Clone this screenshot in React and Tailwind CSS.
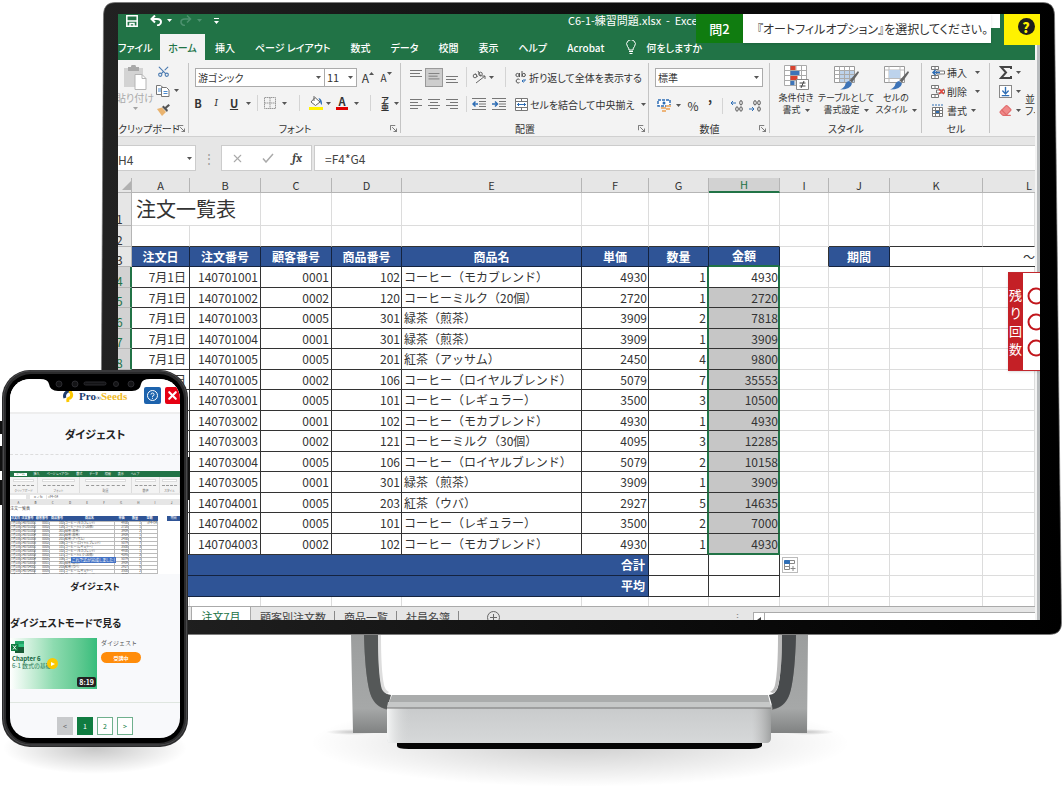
import { ArrowDownToLine, Eraser, Scissors, X } from 'lucide-react'
import clsx from 'clsx'

const tabs = ['挿入', 'ページ レイアウト', '数式', 'データ', '校閲', '表示', 'ヘルプ', 'Acrobat']

const orders = [
  ['140701001', '0001', '102', 'コーヒー（モカブレンド）', 4930, 1, 4930],
  ['140701002', '0002', '120', 'コーヒーミルク（20個）', 2720, 1, 2720],
  ['140701003', '0005', '301', '緑茶（煎茶）', 3909, 2, 7818],
  ['140701004', '0001', '301', '緑茶（煎茶）', 3909, 1, 3909],
  ['140701005', '0005', '201', '紅茶（アッサム）', 2450, 4, 9800],
  ['140701005', '0002', '106', 'コーヒー（ロイヤルブレンド）', 5079, 7, 35553],
  ['140703001', '0005', '101', 'コーヒー（レギュラー）', 3500, 3, 10500],
  ['140703002', '0001', '102', 'コーヒー（モカブレンド）', 4930, 1, 4930],
  ['140703003', '0002', '121', 'コーヒーミルク（30個）', 4095, 3, 12285],
  ['140703004', '0005', '106', 'コーヒー（ロイヤルブレンド）', 5079, 2, 10158],
  ['140703005', '0001', '301', '緑茶（煎茶）', 3909, 1, 3909],
  ['140704001', '0005', '203', '紅茶（ウバ）', 2927, 5, 14635],
  ['140704002', '0005', '101', 'コーヒー（レギュラー）', 3500, 2, 7000],
  ['140704003', '0002', '102', 'コーヒー（モカブレンド）', 4930, 1, 4930],
]

const headings = ['注文日', '注文番号', '顧客番号', '商品番号', '商品名', '単価', '数量', '金額']
const letters = ['A', 'B', 'C', 'D', 'E', 'F', 'G', 'H', 'I', 'J', 'K', 'L']

function Caret({ className }) {
  return (
    <svg viewBox="0 0 5 3" className={clsx('h-[3px] w-[5px] shrink-0', className)} fill="#555">
      <path d="M0 0h5L2.500 3z" />
    </svg>
  )
}

function Divider({ className }) {
  return <span className={clsx('w-px justify-self-center bg-[#d4d4d4]', className)} />
}

function IconButton({ label, className, children }) {
  return (
    <button type="button" aria-label={label} className={clsx('flex shrink-0 items-center justify-center', className)}>
      {children}
    </button>
  )
}

function Group({ label, launcher = true, start, className, children }) {
  return (
    <section className={clsx('relative flex shrink-0 flex-col', className)}>
      <div className="h-[62px]">{children}</div>
      <div className={clsx('flex h-[14px] items-center leading-none', start ? 'justify-start' : 'justify-center')}>{label}</div>
      {launcher && (
        <svg viewBox="0 0 8 8" className="absolute right-1 bottom-1 size-[7px]" fill="none" stroke="#666">
          <path d="M.5 6V.5H6M2.500 2.500l5 5M7.500 4v3.500H4" />
        </svg>
      )}
      <span className="absolute top-[3px] right-0 bottom-[3px] w-px bg-[#c4c4c4]" />
    </section>
  )
}

/* ---- ribbon icons ---- */

function Lines({ widths, align = 'start', className }) {
  return (
    <svg viewBox="0 0 12 11" className={clsx('h-[11px] w-[12px]', className)} stroke="#777">
      {widths.map((w, i) => {
        const x = align === 'start' ? 0 : align === 'end' ? 12 - w : (12 - w) / 2
        return <path key={i} d={`M${x} ${i * 3 + 0.5}h${w}`} />
      })}
    </svg>
  )
}

function IndentIcon({ flip }) {
  return (
    <svg viewBox="0 0 14 12" className="h-[12px] w-[14px]" fill="none">
      <path d="M0 .5h14M7 3.500h7M7 6h7M7 8.500h7M0 11.500h14" stroke="#777" />
      <path d={flip ? 'M0 6h5M3 3.500L5.500 6 3 8.500' : 'M6 6H1M3.500 3.500L1 6l2.500 2.500'} stroke="#2f6eb5" strokeWidth="1.500" />
    </svg>
  )
}

function PasteIcon() {
  return (
    <svg viewBox="0 0 24 25" className="h-[25px] w-[24px]">
      <path d="M1 3h19v19H1z" fill="#d3d3d3" />
      <path d="M5 2h3a2.500 2.500 0 0 1 5 0h3v4H5z" fill="#a9a9a9" />
      <path d="M12 9.500h7l4 4v11H12z" fill="#fff" stroke="#b5b5b5" />
      <path d="M19 9.500v4h4" fill="none" stroke="#b5b5b5" />
    </svg>
  )
}

function CopyIcon() {
  return (
    <svg viewBox="0 0 14 12" className="h-[12px] w-[14px]" fill="#fff" stroke="#777">
      <path d="M.5.5h4l2.500 2v7H.5z" />
      <path d="M2 4h3M2 6h3" stroke="#4b8bd0" />
      <path d="M5.500 2.500h5l2.500 2.500v6.500H5.500z" />
      <path d="M7.500 6.500h4M7.500 8.500h4" stroke="#4b8bd0" />
    </svg>
  )
}

function BrushIcon() {
  return (
    <svg viewBox="0 0 14 12" className="h-[12px] w-[14px]">
      <path d="M1 5l5-1.500 4 4.500-4 4z" fill="#e9b36f" />
      <path d="M6 3l5 5 1-2-1.500-1.500L14 1.500 12.500 0 9 3 7.500 1.500z" fill="#555" />
    </svg>
  )
}

function BordersIcon() {
  return (
    <svg viewBox="0 0 12 12" className="size-[12px]" fill="none" stroke="#999">
      <path d="M.5.5h11v11H.5zM6 .5v11M.5 6h11" strokeDasharray="1.500 .5" />
    </svg>
  )
}

function BucketIcon() {
  return (
    <svg viewBox="0 0 14 14" className="size-[14px]">
      <path d="M6 1.500L11 6 6.500 9.500 2 6z" fill="#fff" stroke="#666" />
      <path d="M5 0v5" stroke="#666" />
      <path d="M9.500 2q4 1 3.500 7-1.500-1-2-3.500z" fill="#2f6eb5" />
      <path d="M0 11h14v3H0z" fill="#fff200" />
    </svg>
  )
}

function OrientationIcon() {
  return (
    <svg viewBox="0 0 14 14" className="size-[14px]" fill="none" stroke="#666">
      <circle cx="3" cy="6" r="1.800" />
      <path d="M3.500 3.500l2 3.500M6 1l3 5.500" />
      <circle cx="8.500" cy="4" r="1.800" />
      <path d="M4 13l9-7M13 9V6h-3" />
    </svg>
  )
}

function WrapIcon() {
  return (
    <svg viewBox="0 0 12 13" className="h-[13px] w-[12px] shrink-0" fill="none" stroke="#555">
      <circle cx="2.500" cy="4" r="1.600" />
      <path d="M4.500 2v4M7 0v6" />
      <circle cx="8.800" cy="4" r="1.600" />
      <path d="M4.500 8.500a2 2 0 1 0 0 3" />
      <path d="M10 8v2H7M8.500 8.500L7 10l1.500 1.500" stroke="#2f6eb5" />
    </svg>
  )
}

function MergeIcon() {
  return (
    <svg viewBox="0 0 13 13" className="size-[13px] shrink-0" fill="#fff" stroke="#777">
      <path d="M.5.5h12v12H.5zM.5 3.500h12M.5 9.500h12M6.500.5v3M6.500 9.500v3" />
      <path d="M2 6.500h9M4 5L2.500 6.500 4 8M9 5l1.500 1.500L9 8" fill="none" stroke="#2f6eb5" />
    </svg>
  )
}

function CurrencyIcon() {
  return (
    <svg viewBox="0 0 14 13" className="h-[13px] w-[14px]">
      <path d="M1 1h12v6H1z" fill="#fff" stroke="#2f6eb5" strokeWidth="1.500" strokeDasharray="3 1" />
      <circle cx="7" cy="4" r="1.500" fill="#2f6eb5" />
      <path d="M4 8h5v2H4zM5 11h4v2H5zM9 6h5v2H9zM9 9h4v2H9z" fill="#edb479" />
    </svg>
  )
}

function DecimalIcon({ grow }) {
  return (
    <svg viewBox="0 0 13 12" className="h-[12px] w-[13px]" fill="none" stroke="#555">
      <ellipse cx="11" cy="2.800" rx="1.300" ry="2.200" />
      {grow ? (
        <path d="M6 3H1M3 1L1 3l2 2" stroke="#2f6eb5" />
      ) : (
        <ellipse cx="7" cy="2.800" rx="1.300" ry="2.200" />
      )}
      <ellipse cx="11" cy="9" rx="1.300" ry="2.200" />
      {grow ? (
        <ellipse cx="7" cy="9" rx="1.300" ry="2.200" />
      ) : (
        <path d="M1 9h5M4 7l2 2-2 2" stroke="#2f6eb5" />
      )}
    </svg>
  )
}

function CondIcon() {
  return (
    <svg viewBox="0 0 25 25" className="size-[25px]">
      <path d="M.5.5h22v20H.5zM.5 5.500h22M.5 10.500h22M.5 15.500h22M6.500.5v20M12 .5v20M17.500.5v20" fill="#fff" stroke="#aaa" />
      <path d="M6.500 1h5v4h-5zM6.500 11h7v4h-7z" fill="#d8432f" />
      <path d="M6.500 6h9v4h-9zM6.500 16h4v4h-4z" fill="#3d74b8" />
      <path d="M12.500 14.500h12v10h-12z" fill="#fff" stroke="#888" />
      <path d="M15.500 18h6M15.500 21h6M20 16l-3 7" stroke="#444" />
    </svg>
  )
}

function TableStyleIcon({ single }) {
  return (
    <svg viewBox="0 0 25 25" className="size-[25px]">
      <path d="M.5 1.500h20v16H.5z" fill="#fff" stroke="#999" />
      {single ? (
        <>
          <path d="M.5 5h20M.5 13.500h20M5 1.500v16M16 1.500v16" stroke="#bbb" />
          <path d="M5 5h11v8H5z" fill="#bdd3ec" />
        </>
      ) : (
        <>
          <path d="M6 6h14v11H6z" fill="#bdd3ec" />
          <path d="M.5 5.500h20M.5 9.500h20M.5 13.500h20M5.500 1.500v16M10.500 1.500v16M15.500 1.500v16" stroke="#aaa" />
        </>
      )}
      <path d="M24 6l1 1.500-7 10-2.500-2z" fill="#666" />
      <path d="M15 16l3 2.500q-1 6-12 6 5-2 5.500-6 1.500-2.500 3.500-2.500z" fill="#3d74b8" />
    </svg>
  )
}

function CellsIcon({ kind }) {
  return (
    <svg viewBox="0 0 14 13" className="h-[13px] w-[14px]" fill="#fff" stroke="#777">
      {kind === 'format' ? (
        <>
          <path d="M1.500 3.500h10v9h-10zM4.500 3.500v9M8.500 3.500v9M1.500 6.500h10M1.500 9.500h10" />
          <path d="M4.500 6.500h4v3h-4z" fill="#2f6eb5" />
          <path d="M1 1h11" stroke="#2f6eb5" strokeDasharray="2 1" />
        </>
      ) : (
        <>
          <path d="M.5.5h7v3h-7zM4 .5v3M.5 9.500h7v3h-7zM4 9.500v3M5.500 5h8v3h-8z" />
          {kind === 'insert' ? (
            <path d="M9 6.500H2M4.500 4L2 6.500 4.500 9" fill="none" stroke="#2f6eb5" strokeWidth="1.500" />
          ) : (
            <path d="M8 4l5 5M13 4L8 9" stroke="#e0433a" strokeWidth="1.500" />
          )}
        </>
      )}
    </svg>
  )
}

/* ---- excel window ---- */

function TitleBar() {
  return (
    <header className="flex h-5 items-start bg-[#217346] text-white">
      <div className="flex h-[13px] items-center pl-2">
        <IconButton label="上書き保存" className="w-3">
          <svg viewBox="0 0 12 12" className="size-3" fill="none" stroke="#fff" strokeWidth="1.500">
            <path d="M.8.8h10.400v10.400H.8zM1 6h10M4 11V8.500h4V11" />
          </svg>
        </IconButton>
        <IconButton label="元に戻す" className="ml-3 w-3">
          <svg viewBox="0 0 12 11" className="h-[11px] w-3" fill="none" stroke="#fff" strokeWidth="2">
            <path d="M1 4h6q4 0 4 3t-4 3.500M5 .5L1.500 4 5 7.500" />
          </svg>
        </IconButton>
        <svg viewBox="0 0 5 3" className="ml-[5px] h-[3px] w-[5px]" fill="#fff"><path d="M0 0h5L2.500 3z" /></svg>
        <IconButton label="やり直し" className="ml-2 w-3">
          <svg viewBox="0 0 12 11" className="h-[11px] w-3" fill="none" stroke="#4e9270" strokeWidth="1.500">
            <path d="M11 4H5Q1 4 1 7t4 3.500M7 .5L10.500 4 7 7.500" />
          </svg>
        </IconButton>
        <svg viewBox="0 0 5 3" className="ml-[5px] h-[3px] w-[5px]" fill="#4e9270"><path d="M0 0h5L2.500 3z" /></svg>
        <svg viewBox="0 0 5 6" className="ml-3 h-[6px] w-[5px]" fill="#fff"><path d="M0 0h5v1H0zM0 3h5L2.500 6z" /></svg>
      </div>
      <h1 className="ml-auto w-[467px] text-[11px] leading-[13px] whitespace-pre">C6-1-練習問題.xlsx  -  Excel</h1>
    </header>
  )
}

function TabBar() {
  return (
    <nav className="flex h-[26px] items-stretch bg-[#217346] text-[10px] font-medium whitespace-nowrap text-white">
      <button type="button" className="w-[42px] shrink-0 text-left">ファイル</button>
      <button type="button" className="w-[45px] shrink-0 bg-[#f3f3f3] text-[#217346]">ホーム</button>
      {tabs.map((tab) => (
        <button key={tab} type="button" className="shrink-0 px-[10px]">{tab}</button>
      ))}
      <button type="button" className="flex shrink-0 items-center gap-[10px] pl-3">
        <svg viewBox="0 0 10 14" className="h-[14px] w-[10px]" fill="none" stroke="#fff">
          <path d="M3 10Q3 8 1.500 6.500a4.300 4.300 0 1 1 7 0Q7 8 7 10zM3 11.500h4M3.500 13.500h3" />
        </svg>
        何をしますか
      </button>
    </nav>
  )
}

function Ribbon() {
  return (
    <div className="flex bg-[#f3f3f3] text-[10px] whitespace-nowrap text-[#333]">
      <Group label="クリップボード" start className="w-[71px]">
        <div className="flex h-full pt-[5px]">
          <button type="button" className="flex w-[34px] flex-col items-center text-[#aaa]">
            <PasteIcon />
            <span className="leading-[16px]">貼り付け</span>
            <Caret className="mt-px opacity-50" />
          </button>
          <div className="flex flex-col gap-[6px] pl-1">
            <IconButton label="切り取り" className="h-[13px] w-[14px]">
              <Scissors size={13} className="-rotate-90 text-[#4a7ab0]" />
            </IconButton>
            <div className="flex items-center gap-1">
              <IconButton label="コピー" className="h-[13px] w-[14px]"><CopyIcon /></IconButton>
              <Caret />
            </div>
            <IconButton label="書式のコピー" className="h-[13px] w-[14px]"><BrushIcon /></IconButton>
          </div>
        </div>
      </Group>

      <Group label="フォント" className="w-[212px]">
        <div className="flex pt-[8px] pl-[6px]">
          <label className="relative flex items-center">
            <select aria-label="フォント名" className="h-[19px] w-[130px] appearance-none border border-[#ababab] bg-white pl-[2px] text-[10px] leading-none">
              <option>游ゴシック</option>
            </select>
            <Caret className="absolute right-1" />
          </label>
          <label className="relative -ml-px flex items-center">
            <select aria-label="フォント サイズ" className="h-[19px] w-[33px] appearance-none border border-[#ababab] bg-white pl-[2px] text-[11px] leading-none">
              <option>11</option>
            </select>
            <Caret className="absolute right-1" />
          </label>
          <IconButton label="拡大" className="ml-1 w-[14px] text-[12px]">A<Caret className="mb-2 rotate-180" /></IconButton>
          <IconButton label="縮小" className="ml-1 w-[14px] text-[10px]">A<Caret className="mb-2" /></IconButton>
        </div>
        <div className="mt-2 grid h-4 grid-cols-[18px_18px_18px_10px_8px_18px_10px_20px_14px_10px_18px_10px_18px_12px_10px] items-center justify-items-center text-[11px]">
          <button type="button" className="font-bold">B</button>
          <button type="button" className="font-serif italic">I</button>
          <button type="button" className="font-bold underline">U</button>
          <Caret />
          <Divider className="h-4" />
          <IconButton label="罫線"><BordersIcon /></IconButton>
          <Caret />
          <Divider className="h-4" />
          <IconButton label="塗りつぶしの色"><BucketIcon /></IconButton>
          <Caret />
          <button type="button" className="h-[14px] w-3 border-b-3 border-[#e00000] leading-[11px] font-bold">A</button>
          <Caret />
          <Divider className="h-4" />
          <button type="button" className="text-[8px] leading-[7px] font-bold">ア<br />亜</button>
          <Caret />
        </div>
      </Group>

      <Group label="配置" className="w-[248px]">
        <div className="grid grid-cols-[18px_18px_18px_10px_16px_8px_20px_130px] items-center justify-items-center gap-y-[9px] pt-[7px] pl-[6px]">
          <IconButton label="上揃え" className="h-[19px] w-[18px] pb-1"><Lines widths={[12, 10, 12]} /></IconButton>
          <IconButton label="上下中央揃え" className="h-[19px] w-[18px] border border-[#999] bg-[#cdcdcd]"><Lines widths={[12, 10, 12]} className="pt-px" /></IconButton>
          <IconButton label="下揃え" className="h-[19px] w-[18px] pt-2"><Lines widths={[12, 10, 12]} /></IconButton>
          <Divider className="h-5" />
          <IconButton label="方向"><OrientationIcon /></IconButton>
          <Caret />
          <Divider className="h-5" />
          <button type="button" className="flex items-center gap-[2px] justify-self-start"><WrapIcon />折り返して全体を表示する</button>
          <IconButton label="左揃え"><Lines widths={[12, 8, 12, 8]} /></IconButton>
          <IconButton label="中央揃え"><Lines widths={[12, 8, 12, 8]} align="center" /></IconButton>
          <IconButton label="右揃え"><Lines widths={[12, 8, 12, 8]} align="end" /></IconButton>
          <Divider className="h-4" />
          <IconButton label="インデントを減らす"><IndentIcon /></IconButton>
          <IconButton label="インデントを増やす" className="col-span-2 pr-1"><IndentIcon flip /></IconButton>
          <button type="button" className="flex items-center gap-[2px] justify-self-start"><MergeIcon />セルを結合して中央揃え<Caret className="ml-1" /></button>
        </div>
      </Group>

      <Group label="数値" className="w-[121px]">
        <div className="pt-[8px] pl-[6px]">
          <label className="relative flex w-[108px] items-center">
            <select aria-label="表示形式" className="h-[19px] w-full appearance-none border border-[#ababab] bg-white pl-[2px] text-[10px] leading-none">
              <option>標準</option>
            </select>
            <Caret className="absolute right-1" />
          </label>
          <div className="mt-2 grid h-4 grid-cols-[18px_10px_20px_14px_10px_18px_18px] items-center justify-items-center">
            <IconButton label="通貨"><CurrencyIcon /></IconButton>
            <Caret />
            <button type="button" className="text-[12px]">%</button>
            <button type="button" className="text-[14px] font-bold">’</button>
            <Divider className="h-4" />
            <IconButton label="小数点以下の表示桁数を増やす"><DecimalIcon grow /></IconButton>
            <IconButton label="小数点以下の表示桁数を減らす"><DecimalIcon /></IconButton>
          </div>
        </div>
      </Group>

      <Group label="スタイル" launcher={false} className="w-[152px]">
        <div className="grid grid-cols-[42px_58px_42px] justify-center pt-[5px] text-[9px] leading-[12px]">
          <button type="button" className="flex flex-col items-center gap-[2px]">
            <CondIcon />
            <span>条件付き<br />書式<Caret className="ml-1 inline-block" /></span>
          </button>
          <button type="button" className="flex flex-col items-center gap-[2px]">
            <TableStyleIcon />
            <span>テーブルとして<br />書式設定<Caret className="ml-1 inline-block" /></span>
          </button>
          <button type="button" className="flex flex-col items-center gap-[2px]">
            <TableStyleIcon single />
            <span>セルの<br />スタイル<Caret className="ml-1 inline-block" /></span>
          </button>
        </div>
      </Group>

      <Group label="セル" launcher={false} className="w-[68px]">
        <div className="flex flex-col gap-[5px] pt-[5px] pl-[9px]">
          <button type="button" className="flex h-[14px] items-center"><CellsIcon kind="insert" /><span className="ml-[2px]">挿入</span><Caret className="ml-2" /></button>
          <button type="button" className="flex h-[14px] items-center"><CellsIcon kind="delete" /><span className="ml-[2px]">削除</span><Caret className="ml-2" /></button>
          <button type="button" className="flex h-[14px] items-center"><CellsIcon kind="format" /><span className="ml-[2px]">書式</span><Caret className="ml-1" /></button>
        </div>
      </Group>

      <div className="flex min-w-0 flex-1 overflow-hidden pt-[5px] pl-[9px]">
        <div className="flex shrink-0 flex-col gap-[5px]">
          <button type="button" aria-label="合計" className="flex h-[14px] items-center gap-1">
            <svg viewBox="0 0 13 13" className="size-[13px]" fill="none" stroke="#444" strokeWidth="2"><path d="M12 3V1H2l5 5.500L2 12h10v-2" /></svg>
            <Caret />
          </button>
          <button type="button" aria-label="フィル" className="flex h-[14px] items-center gap-1">
            <span className="border border-[#888] bg-white"><ArrowDownToLine size={11} strokeWidth={3} className="text-[#2f6eb5]" /></span>
            <Caret />
          </button>
          <button type="button" aria-label="クリア" className="flex h-[14px] items-center gap-1">
            <Eraser size={13} className="fill-[#f08a8a] text-[#e06a6a]" />
            <Caret />
          </button>
        </div>
        <div className="pt-7 pl-1 leading-[12px]">並べ替えと<br />フィルター</div>
      </div>
    </div>
  )
}

function FormulaBar() {
  return (
    <div className="flex items-center border-t border-[#d0d0d0] bg-[#e6e6e6] pt-2 pb-[7px] text-[12px] text-[#444]">
      <label className="relative flex items-center">
        <input aria-label="名前ボックス" defaultValue="H4" className="h-[26px] w-[78px] border border-l-0 border-[#ccc] bg-white pt-[2px]" />
        <Caret className="absolute right-1" />
      </label>
      <span className="w-[25px] text-center text-[#999]">⋮</span>
      <div className="flex h-[26px] w-[91px] shrink-0 items-center justify-around border border-[#ccc] bg-white">
        <IconButton label="キャンセル"><X size={13} className="text-[#aaa]" /></IconButton>
        <IconButton label="入力">
          <svg viewBox="0 0 12 10" className="h-[10px] w-3" fill="none" stroke="#aaa" strokeWidth="1.500"><path d="M1 5.500L4 9l7-8" /></svg>
        </IconButton>
        <button type="button" aria-label="関数の挿入" className="font-serif font-bold italic">fx</button>
      </div>
      <input aria-label="数式バー" defaultValue="=F4*G4" className="ml-[2px] h-[26px] min-w-0 flex-1 border border-r-0 border-[#ccc] bg-white pl-[10px]" />
    </div>
  )
}

const grid = 'border-r border-b border-[#dcdcdc]'
const cell = 'border-r border-b border-[#333]'
const head = 'border-r border-b border-[#14233f] bg-[#2f5496] font-bold text-white'

function RowHead({ n, selected }) {
  return (
    <th
      scope="row"
      className={clsx(
        'overflow-hidden border-b text-left align-bottom font-normal',
        selected
          ? 'border-r-2 border-b-[#b5b5b5] border-r-[#217346] bg-[#d2d2d2] text-[#217346]'
          : 'border-r border-[#b5b5b5] bg-[#e6e6e6]',
      )}
    >
      <span className="block -indent-[2px] leading-[13px]">{n}</span>
    </th>
  )
}

function Sheet() {
  return (
    <table className="w-full table-fixed border-separate border-spacing-0 bg-white text-[12px] leading-none whitespace-nowrap text-[#333] [font-feature-settings:normal] [&_td]:p-0 [&_th]:p-0">
      <colgroup>
        <col className="w-[14px]" />
        <col className="w-[58px]" />
        <col className="w-[71px]" />
        <col className="w-[71px]" />
        <col className="w-[70px]" />
        <col className="w-[180px]" />
        <col className="w-[67px]" />
        <col className="w-[60px]" />
        <col className="w-[71px]" />
        <col className="w-[49px]" />
        <col className="w-[61px]" />
        <col className="w-[93px]" />
        <col />
      </colgroup>
      <thead>
        <tr className="h-[15px] bg-[#e6e6e6] text-[11px]">
          <th className="border-r border-b border-[#b5b5b5]">
            <svg viewBox="0 0 9 9" className="ml-auto size-[9px]" fill="#b1b1b1"><path d="M9 0v9H0z" /></svg>
          </th>
          {letters.map((l) => (
            <th
              key={l}
              scope="col"
              className={clsx(
                'border-[#b5b5b5] font-normal',
                l === 'H' ? 'border-b-2 border-b-[#217346] bg-[#d2d2d2] text-[#217346]' : 'border-b',
                l === 'L' ? 'text-right' : 'border-r',
              )}
            >
              {l === 'L' ? <span className="pr-[3px]">{l}</span> : l}
            </th>
          ))}
        </tr>
      </thead>
      <tbody>
        <tr className="h-[33px]">
          <RowHead n={1} />
          <td colSpan={2} className={clsx(grid, 'text-[20px]')}><span className="pl-1">注文一覧表</span></td>
          {letters.slice(2).map((l) => <td key={l} className={grid} />)}
        </tr>
        <tr className="h-[21px]">
          <RowHead n={2} />
          {letters.map((l) => (
            <td key={l} className={clsx(grid, l !== 'I' && 'border-b-[#333]')} />
          ))}
        </tr>
        <tr className="h-5">
          <RowHead n={3} />
          {headings.map((h) => (
            <th key={h} scope="col" className={clsx(head, h === '金額' && 'border-b-2 border-b-[#217346]')}>{h}</th>
          ))}
          <td className={clsx(grid, 'border-r-[#333]')} />
          <th className={head}>期間</th>
          <td className="border-b border-[#333]" />
          <td className="border-b border-[#333] text-right">～</td>
        </tr>
        {orders.map(([id, customer, product, name, price, qty, total], i) => {
          const last = i === orders.length - 1
          return (
            <tr key={i} className={i % 2 && !last ? 'h-5' : 'h-[21px]'}>
              <RowHead n={i + 4} selected />
              <td className={clsx(cell, 'text-right')}><span className="pr-[3px]">7月1日</span></td>
              <td className={clsx(cell, 'text-right')}><span className="pr-[2px]">{id}</span></td>
              <td className={clsx(cell, 'text-right')}><span className="pr-[2px]">{customer}</span></td>
              <td className={clsx(cell, 'text-right')}><span className="pr-px">{product}</span></td>
              <td className={clsx(cell, 'overflow-hidden')}><span className="pl-[2px]">{name}</span></td>
              <td className={clsx(cell, 'text-right')}><span className="pr-px">{price}</span></td>
              <td className="border-r-2 border-b border-r-[#217346] border-b-[#333] text-right"><span className="pr-px">{qty}</span></td>
              <td
                className={clsx(
                  'border-r-2 border-r-[#217346] text-right',
                  last ? 'border-b-2 border-b-[#217346]' : 'border-b border-b-[#333]',
                  i > 0 && 'bg-[#c6c6c6]',
                )}
              >
                {total}
              </td>
              {letters.slice(8).map((l) => <td key={l} className={grid} />)}
            </tr>
          )
        })}
        {['合計', '平均'].map((t, i) => (
          <tr key={t} className="h-[21px]">
            <RowHead n={18 + i} />
            <th scope="row" colSpan={6} className={clsx(head, 'text-right')}><span className="pr-[3px]">{t}</span></th>
            <td className={cell} />
            <td className={cell} />
            <td className={grid}>
              {i === 0 && (
                <button type="button" aria-label="オートフィル オプション" className="ml-[2px] block border border-[#bbb] bg-white p-px">
                  <svg viewBox="0 0 12 12" className="size-[12px]" fill="#fff" stroke="#888">
                    <path d="M5.500 1.500h5v3h-5zM.5 4.500h5v3h-5zM.5 7.500h5v3h-5zM9 7v5M6.500 9.500h5" />
                    <path d="M.5 1.500h5v3h-5z" fill="#2f6eb5" stroke="#2f6eb5" />
                  </svg>
                </button>
              )}
            </td>
            {letters.slice(9).map((l) => <td key={l} className={grid} />)}
          </tr>
        ))}
        <tr className="h-[9px]">
          <th className="bg-[#e6e6e6]" />
          {letters.map((l) => <td key={l} className="border-r border-[#dcdcdc]" />)}
        </tr>
      </tbody>
    </table>
  )
}

function SheetTabs() {
  return (
    <footer className="flex h-[14px] items-start overflow-hidden border-t border-[#aaa] bg-[#e6e6e6] text-[11px] leading-[20px] whitespace-nowrap text-[#444]">
      <button type="button" className="-mt-px ml-[73px] w-[60px] border-x border-[#aaa] bg-white text-[#217346]">注文7月</button>
      {['顧客別注文数', '商品一覧', '社員名簿'].map((t) => (
        <button key={t} type="button" className="relative px-[9px]">
          {t}
          <span className="absolute top-1 right-0 h-4 w-px bg-[#888]" />
        </button>
      ))}
      <IconButton label="新しいシート" className="ml-7 pt-[4px]">
        <svg viewBox="0 0 13 13" className="size-[13px]" fill="none" stroke="#666"><circle cx="6.500" cy="6.500" r="6" /><path d="M6.500 3v7M3 6.500h7" /></svg>
      </IconButton>
      <span className="ml-auto pr-[10px] text-[#888]">⋮</span>
      <IconButton label="左へスクロール" className="mt-[5px] h-4 w-[12px] border border-[#aaa] bg-white">
        <svg viewBox="0 0 4 6" className="h-[6px] w-1" fill="#444"><path d="M4 0v6L0 3z" /></svg>
      </IconButton>
      <span className="mt-[5px] h-4 w-[270px] border-t border-[#aaa] bg-white" />
    </footer>
  )
}

function QuizOverlay() {
  return (
    <>
      <div className="absolute top-0 right-[40px] h-[14px] w-6 bg-white" />
      <div className="absolute top-0 right-[49px] flex h-[29px] w-[295px] text-[#333]">
        <div className="flex w-[47px] shrink-0 items-center justify-center bg-[#107c10] text-[13px] font-medium text-white">問2</div>
        <p className="flex flex-1 items-center bg-white pl-[14px] text-[12px] whitespace-nowrap shadow-sm">『オートフィルオプション』を選択してください。</p>
      </div>
      <button type="button" aria-label="ヘルプ" className="absolute top-0 right-0 flex h-[31px] w-[36px] justify-center bg-[#fff200] pt-[4px] pl-2">
        <span className="flex size-[17px] items-center justify-center rounded-full bg-[#1d1d1b] text-[14px] leading-none font-black text-[#fff200]">?</span>
      </button>
      <div className="absolute top-[258px] right-0 flex h-[99px] w-8 overflow-hidden border-y border-[#c1272d] bg-white shadow">
        <div className="flex w-[15px] shrink-0 flex-col items-center justify-center bg-[#c42026] text-[13px] leading-[18px] text-white">
          <span>残</span>
          <span>り</span>
          <span>回</span>
          <span>数</span>
        </div>
        <svg viewBox="0 0 17 97" className="h-[97px] w-[17px] shrink-0" fill="none" stroke="#c1161c" strokeWidth="2">
          <circle cx="13" cy="23" r="7.500" />
          <circle cx="13" cy="49" r="7.500" />
          <circle cx="13" cy="75" r="7.500" />
        </svg>
      </div>
    </>
  )
}

function Monitor() {
  return (
    <section className="relative mt-[2px] mr-px ml-[99px] pt-3 pr-[22px] pb-[15px] pl-[19px]">
      <svg viewBox="0 0 963 632" preserveAspectRatio="none" className="absolute inset-0 size-full">
        <defs>
          <linearGradient id="bezel">
            <stop offset="0" stopColor="#222" />
            <stop offset=".6" stopColor="#0c0c0c" />
            <stop offset="1" stopColor="#000" />
          </linearGradient>
        </defs>
        <path d="M4.500 12Q5 .5 16 .5h928q11 0 11.500 12L962.500 620q0 11.500-12 11.500H12Q1 631.500 1 620z" fill="url(#bezel)" stroke="#777" strokeWidth=".7" />
      </svg>
      <div className="relative overflow-hidden">
        <div className="flex bg-white">
          <main className="min-w-0 flex-1 overflow-hidden">
            <TitleBar />
            <TabBar />
            <Ribbon />
            <FormulaBar />
            <Sheet />
            <SheetTabs />
          </main>
          <div className="w-[5px] shrink-0 border-r-3 border-[#b9bcbe] bg-[#f4f4f4]" />
        </div>
        <QuizOverlay />
      </div>
    </section>
  )
}

function Stand() {
  return (
    <svg viewBox="0 0 560 152" className="ml-[300px] block h-[152px] w-[560px]">
      <defs>
        <linearGradient id="leg" x1="0" y1="0" x2="0" y2="1">
          <stop offset="0" stopColor="#9c9e9e" />
          <stop offset=".75" stopColor="#a6a8a8" />
          <stop offset="1" stopColor="#808282" />
        </linearGradient>
        <linearGradient id="front" x1="0" y1="0" x2="0" y2="1">
          <stop offset="0" stopColor="#c9cbcc" />
          <stop offset="1" stopColor="#d6d8d9" />
        </linearGradient>
        <linearGradient id="side">
          <stop offset="0" stopColor="#f4f5f5" />
          <stop offset=".06" stopColor="#d4d6d6" stopOpacity="0" />
          <stop offset=".95" stopColor="#bbb" stopOpacity="0" />
          <stop offset="1" stopColor="#9fa1a1" />
        </linearGradient>
        <radialGradient id="floor">
          <stop offset="0" stopColor="#000" stopOpacity=".2" />
          <stop offset="1" stopColor="#000" stopOpacity="0" />
        </radialGradient>
      </defs>
      <ellipse cx="280" cy="108" rx="270" ry="44" fill="url(#floor)" />
      <ellipse cx="52" cy="97" rx="26" ry="3" fill="url(#floor)" />
      <ellipse cx="508" cy="97" rx="26" ry="3" fill="url(#floor)" />
      <path d="M51 0h29v40q0 22 12 34v24H53z" fill="url(#leg)" />
      <path d="M62 0h2q1 40 6 58 4 14 18 17v-4l-2-9q-12-8-15-62z" fill="#777" />
      <path d="M64 0h14q0 36 4 52 2 7 9 8l-4 14q-14-2-18-20-4-18-5-54z" fill="#555858" />
      <path d="M78 0h3q0 36 3 50 1 5 5 7l-2 2q-5-2-6-8Q78 36 78 0z" fill="#ddd" />
      <path d="M508 0h-28v40q0 22-12 34v24h39z" fill="url(#leg)" />
      <path d="M498 0h-2q-1 40-6 58-4 14-18 17v-4l2-9q12-8 15-62z" fill="#777" />
      <path d="M496 0h-14q0 36-4 52-2 7-9 8l4 14q14-2 18-20 4-18 5-54z" fill="#484b4d" />
      <path d="M482 0h-4q0 36-3 50-1 5-5 7l3 1q4-2 5-7 4-15 4-51z" fill="#bbb" />
      <path d="M92 60h376l3 12H87z" fill="#aaacac" />
      <path d="M88 67h382l1 6H87z" fill="#c6c8c8" />
      <path d="M97 106h365v5q-2 3-12 3H109q-12 0-12-3z" fill="#050505" />
      <path d="M87 73h384v30q0 5-5 5H91q-4 0-4-5z" fill="url(#front)" />
      <path d="M87 73h384v30q0 5-5 5H91q-4 0-4-5z" fill="url(#side)" />
      <path d="M87 73h384" stroke="#777" />
    </svg>
  )
}

/* ---- phone ---- */

function LessonShot() {
  return (
    <div className="h-[103px] overflow-hidden bg-white text-[3px] leading-none whitespace-nowrap text-[#444]">
      <div className="flex h-[6px] items-center gap-[7px] bg-[#217346] pl-1 text-white">
        <span className="bg-white px-[2px] text-[#217346]">ホーム</span>
        {tabs.slice(0, 7).map((t) => <span key={t}>{t}</span>)}
      </div>
      <div className="grid h-[16px] grid-cols-[28px_42px_52px_28px_auto] bg-[#f3f3f3] text-center text-[#777]">
        {['クリップボード', 'フォント', '配置', '数値', 'スタイル'].map((g) => (
          <div key={g} className="flex flex-col items-center justify-between border-r border-[#ddd] pt-[2px]">
            <span className="h-[3px] w-4/5 border border-[#ddd] bg-white" />
            <span className="h-[2px] w-3/4 border-t border-dashed border-[#999]" />
            <span>{g}</span>
          </div>
        ))}
      </div>
      <div className="flex h-[8px] items-center bg-[#e6e6e6] leading-[4px]">
        <span className="w-[16px] bg-white">&nbsp;</span>
        <span className="ml-1 w-[16px] bg-white text-center">× ✓ fx</span>
        <span className="ml-px flex-1 bg-white pl-px">=F4*G4</span>
      </div>
      <div className="flex h-[4px] items-center justify-around bg-[#e6e6e6]">
        {letters.slice(0, 10).map((l) => <span key={l}>{l}</span>)}
      </div>
      <div className="flex h-[11px] items-start pt-px text-[4px]">注文一覧表</div>
      <div className="flex items-start justify-between">
        <table className="w-[147px] table-fixed border-collapse [&_td]:border [&_td]:border-[#bbb] [&_td]:p-0">
          <colgroup>
            <col className="w-[10px]" />
            <col className="w-[14px]" />
            <col className="w-[15px]" />
            <col className="w-[15px]" />
            <col className="w-[50px]" />
            <col className="w-[14px]" />
            <col className="w-[13px]" />
            <col className="w-[16px]" />
          </colgroup>
          <thead>
            <tr className="h-[5px] bg-[#2f5496] text-white">
              {headings.map((h) => <th key={h} className="p-0">{h}</th>)}
            </tr>
          </thead>
          <tbody>
            {orders.map(([id, customer, product, name, price, qty], i) => (
              <tr key={i} className="h-[4px] text-right">
                <td>7月1日</td>
                <td>{id}</td>
                <td>{customer}</td>
                <td>{product}</td>
                <td className="text-left">{name}</td>
                <td>{price}</td>
                <td>{qty}</td>
                <td>{i === 0 && '=F4*G4'}</td>
              </tr>
            ))}
          </tbody>
        </table>
        <span className="w-[13px] bg-[#2f5496] text-center leading-[5px] text-white">期間</span>
      </div>
    </div>
  )
}

function PhoneScreen() {
  return (
    <div className="relative mx-[10px] overflow-hidden rounded-[20px] bg-[#f8f9fb] text-[#222]">
      <header className="flex h-[33px] items-start bg-white pt-2">
        <div className="flex h-[18px] items-center pl-[53px]">
          <svg viewBox="0 0 12 14" className="h-[14px] w-3" fill="none" strokeWidth="3">
            <path d="M2 9a5 5 0 0 1 5-7" stroke="#1d3c6e" />
            <path d="M6 2a4 4 0 0 1 1 7q-3 0-2 4" stroke="#fcc800" />
          </svg>
          <span className="ml-1 font-['Liberation_Serif',serif] text-[11px] font-bold text-[#1d3c6e]">Pro<span className="text-[7px]">∞</span><span className="text-[#f0bb2a]">Seeds</span></span>
        </div>
        <IconButton label="ヘルプ" className="ml-auto size-[17px] rounded-[2px] bg-[#1d63ad]">
          <svg viewBox="0 0 11 11" className="size-[11px]" fill="none" stroke="#fff"><circle cx="5.500" cy="5.500" r="5" /><path d="M4 4.500q0-1.500 1.500-1.500T7 4.500 5.500 6v.8M5.500 7.800v1" /></svg>
        </IconButton>
        <IconButton label="閉じる" className="ml-1 h-[17px] w-[15px] rounded-l-[2px] bg-[#e60012]">
          <X size={13} strokeWidth={4} className="text-white" />
        </IconButton>
      </header>
      <h2 className="flex h-[43px] items-center justify-center border-t-2 border-b border-t-[#eee] border-b-[#ddd] [border-bottom-style:dashed] text-[11px] font-bold">ダイジェスト</h2>
      <div className="relative mt-4">
        <LessonShot />
        <p className="absolute bottom-[11px] left-[61px] bg-[#4472c4] px-px text-[4px] leading-[6px] text-white">これで式が完成しました！</p>
      </div>
      <p className="h-[37px] pt-[6px] text-center text-[9px] leading-[14px] font-bold">ダイジェスト</p>
      <h3 className="text-[10px] leading-[24px] font-bold whitespace-nowrap">ダイジェストモードで見る</h3>
      <div className="mt-[3px] flex gap-1">
        <div className="relative h-[51px] w-[87px] bg-linear-to-l from-[#35bd7c] via-[#8ddbb0] via-50% to-white pt-[14px] pl-[2px] text-[6px] leading-[7px] whitespace-nowrap text-[#2a7a55]">
          <svg viewBox="0 0 13 12" className="absolute top-[3px] left-px h-3 w-[13px]">
            <path d="M4 0h9v12H4z" fill="#21a366" />
            <path d="M8 3h5v3H8z" fill="#33c481" />
            <path d="M4 6h9v6H4z" fill="#185c37" />
            <path d="M0 3h7v7H0z" fill="#107c41" />
            <path d="M2 4.500l3 4M5 4.500l-3 4" stroke="#fff" />
          </svg>
          <p className="pt-[3px] font-bold text-[#12633d]">Chapter 6</p>
          <p>6-1 数式の基礎</p>
          <span className="absolute top-[20px] left-[37px] flex size-[11px] items-center justify-center rounded-full bg-[#fcc800]">
            <svg viewBox="0 0 4 4" className="size-1" fill="#fff"><path d="M0 0l4 2-4 2z" /></svg>
          </span>
          <span className="absolute right-px bottom-[2px] rounded-[2px] bg-[#222] px-[2px] text-[7px] leading-[10px] font-bold text-white">8:19</span>
        </div>
        <div>
          <p className="text-[6px] leading-[9px] text-[#555] [font-feature-settings:normal]">ダイジェスト</p>
          <span className="mt-[5px] block w-10 rounded-full bg-[#ff8c0a] text-center text-[5px] leading-[11px] font-bold text-white">受講中</span>
        </div>
      </div>
      <nav className="mt-[13px] flex justify-center gap-1 border-t border-[#dfe6e0] pt-[14px] pb-[3px] text-[7px] text-[#107c41]">
        <button type="button" className="h-[18px] w-4 bg-[#c8cacc] text-[#666]">&lt;</button>
        <button type="button" className="h-[18px] w-4 bg-[#107c41] text-white">1</button>
        <button type="button" className="h-[18px] w-4 border border-[#6fb08d] bg-white">2</button>
        <button type="button" className="h-[18px] w-4 border border-[#6fb08d] bg-white">&gt;</button>
      </nav>
    </div>
  )
}

function Phone() {
  return (
    <section className="absolute top-[370px] left-0 w-[190px]">
      <svg viewBox="0 0 190 416" className="absolute inset-x-0 top-0 h-[416px] w-[190px]">
        <defs>
          <radialGradient id="phoneShadow">
            <stop offset="0" stopColor="#000" stopOpacity=".45" />
            <stop offset="1" stopColor="#000" stopOpacity="0" />
          </radialGradient>
        </defs>
        <ellipse cx="95" cy="378" rx="92" ry="26" fill="url(#phoneShadow)" opacity=".5" />
        <path d="M0 51h4v13H0zM0 76h4v25H0zM0 110h4v25H0zM186 87h4v43h-4z" fill="#111" />
        <rect x="2" y="0" width="186" height="377" rx="28" fill="#2b2b2c" />
        <rect x="3.500" y="1" width="183" height="374" rx="27" fill="none" stroke="#4a4a4c" />
        <rect x="6" y="4" width="178" height="369" rx="25" fill="#000" />
      </svg>
      <div className="relative py-[9px]">
        <PhoneScreen />
      </div>
      <svg viewBox="0 0 110 16" className="absolute top-[5px] left-[40px] h-4 w-[110px]">
        <path d="M0 0h110v4q-8 0-9 5-1 7-9 7H18q-8 0-9-7-1-5-9-5z" fill="#000" />
        <g fill="#141416" stroke="#2a2a2e">
          <circle cx="19" cy="9" r="3" />
          <circle cx="35" cy="9" r="3" />
          <circle cx="76" cy="9" r="2.500" />
          <circle cx="91" cy="9" r="3" />
          <rect x="44" y="7" width="22" height="3" rx="1.500" />
        </g>
      </svg>
    </section>
  )
}

export default function App() {
  return (
    <div className="relative overflow-hidden bg-white font-['Noto_Sans_CJK_JP',sans-serif] [font-feature-settings:'palt']">
      <Monitor />
      <Stand />
      <Phone />
    </div>
  )
}
